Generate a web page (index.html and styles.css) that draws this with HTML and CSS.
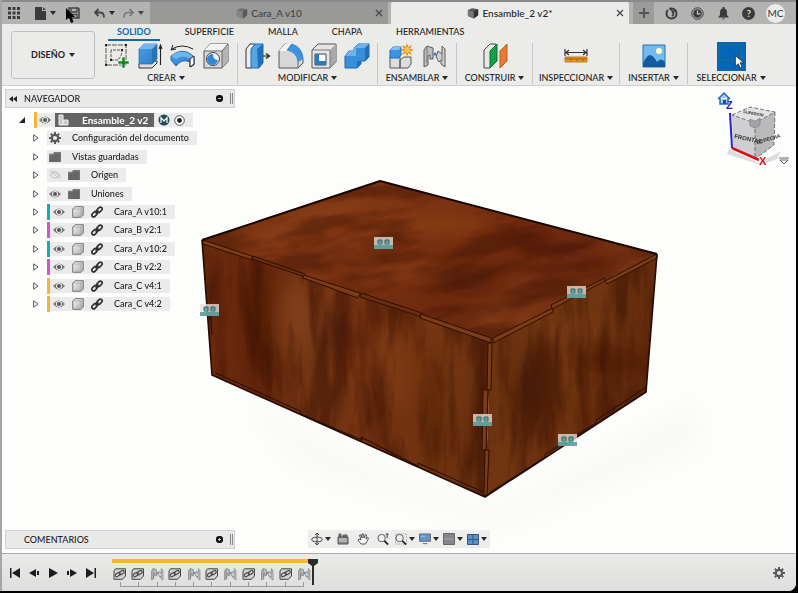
FILE: index.html
```html
<!DOCTYPE html>
<html lang="es">
<head>
<meta charset="utf-8">
<title>Ensamble_2 v2*</title>
<link rel="stylesheet" href="styles.css">
</head>
<body>
<svg class="defs" aria-hidden="true">
  <defs>
    <linearGradient id="gBlue" x1="0" y1="0" x2="1" y2="1"><stop offset="0" stop-color="#4aa0e6"/><stop offset="1" stop-color="#2b7cc9"/></linearGradient>
    <linearGradient id="gGrey" x1="0" y1="0" x2="1" y2="1"><stop offset="0" stop-color="#f6f6f6"/><stop offset="1" stop-color="#a9a9a9"/></linearGradient>
    <symbol id="eye" viewBox="0 0 12 10"><path d="M0 5Q6-2 12 5Q6 12 0 5Z" fill="#777"/><circle cx="6" cy="5" r="3" fill="#eee"/><circle cx="6" cy="5" r="2" fill="#555"/></symbol>
    <symbol id="eyeoff" viewBox="0 0 12 10"><path d="M1 5Q6-1 11 5Q6 11 1 5M1 1l10 8M3 0l9 7" fill="none" stroke="#c2c2c2"/></symbol>
    <symbol id="folder" viewBox="0 0 13 11"><path d="M0 2h4l2-2h7v11H0Z" fill="#666"/><path d="M0 3h5l2-2h6" fill="none" stroke="#999" stroke-width=".7"/></symbol>
    <symbol id="gear" viewBox="0 0 12 12"><circle cx="6" cy="6" r="3.2" fill="none" stroke="#5b5b5b" stroke-width="2.2"/><path d="M6 0v2.500M6 9.500V12M0 6h2.500M9.500 6H12M1.800 1.800l1.800 1.800M8.400 8.400l1.800 1.800M10.200 1.800L8.400 3.600M3.600 8.400l-1.800 1.800" stroke="#5b5b5b" stroke-width="2"/></symbol>
    <symbol id="body" viewBox="0 0 12 12"><path d="M1 3L3 .7H11.300V9L9 11.300H.700V3Z" fill="url(#gGrey)" stroke="#77777f" stroke-linejoin="round"/><path d="M1 3H9V11M9 3l2-2" fill="none" stroke="#a5a5ad" stroke-width=".8"/></symbol>
    <symbol id="link" viewBox="0 0 12 12"><g fill="none" stroke="#2c2c2c" stroke-width="1.600"><rect x="5.500" y="2" width="6" height="3.600" rx="1.800" transform="rotate(-45 8.500 3.800)"/><rect x=".5" y="6.400" width="6" height="3.600" rx="1.800" transform="rotate(-45 3.500 8.200)"/><path d="M4.500 7.500l3-3"/></g></symbol>
    <symbol id="tri" viewBox="0 0 6 8"><path d="M.7.8v6.400L5 4Z" fill="#fff" stroke="#444" stroke-width=".9"/></symbol>
    <symbol id="triopen" viewBox="0 0 6 6"><path d="M6 0v6H0Z" fill="#222"/></symbol>
    <symbol id="cube" viewBox="0 0 14 13"><path d="M1 3L6 1L13 2V9L8 13L1 10Z" fill="#555"/><path d="M1 3L8 5V13L1 10Z" fill="#777"/><path d="M8 5l5-3v7l-5 4Z" fill="#303030"/></symbol>
    <symbol id="comp" viewBox="0 0 14 12"><path d="M2.500.8H12.500V8L9.500 11.300H1V3Z" fill="#d2d2d2" stroke="#444"/><g fill="none" stroke="#444" stroke-width="1.100"><rect x="2" y="5" width="5.500" height="3" rx="1.500" transform="rotate(-30 5 6.500)"/><rect x="6" y="3.500" width="5.500" height="3" rx="1.500" transform="rotate(-30 8 5)"/></g></symbol>
    <symbol id="joint" viewBox="0 0 26 26"><path d="M3 24V7L6 3L12 5V16H9V12L7 13V22Z" fill="#bdbdbd" stroke="#5b5b5b" stroke-linejoin="round"/><path d="M24 24V6L21 3V11L17 8L15 14L18 19L20 17V21Z" fill="#cfcfcf" stroke="#5b5b5b" stroke-linejoin="round"/><path d="M6 3V20M21 11V18" stroke="#777"/><circle cx="14" cy="11" r="1.500" fill="#267bd0"/></symbol>
    <symbol id="x" viewBox="0 0 8 8"><path d="M1 1l6 6M7 1L1 7" stroke="#444" stroke-width="1.200"/></symbol>
    <symbol id="mark" viewBox="0 0 19 12"><path d="M0 0H19V12H0Z" fill="#e8dfd8" fill-opacity=".78"/><path d="M0 12V8H4V3H8V8H11V3H15V8H19V12Z" fill="#4b9896" fill-opacity=".82"/><path d="M4 7V3H8V7M11 7V3H15V7" fill="none" stroke="#386966"/></symbol>
  </defs>
</svg>

<div class="window">
  <header class="titlebar">
    <div class="quick">
      <button class="ib" aria-label="Panel de datos"><svg width="12" height="12" viewBox="0 0 12 12" fill="#3b3b3b"><path d="M0 0h3v3H0zM4.500 0h3v3h-3zM9 0h3v3H9zM0 4.500h3v3H0zM4.500 4.500h3v3h-3zM9 4.500h3v3H9zM0 9h3v3H0zM4.500 9h3v3h-3zM9 9h3v3H9z"/></svg></button>
      <button class="ib drop file" aria-label="Archivo"><svg width="11" height="13" viewBox="0 0 11 13"><path d="M0 0h7v4h4v9H0ZM8 0l3 3H8Z" fill="#3b3b3b"/></svg></button>
      <button class="ib save" aria-label="Guardar"><svg width="12" height="12" viewBox="0 0 12 12"><path d="M1 1h9l1 1v9H1Z" fill="none" stroke="#444" stroke-width="1.500"/><path d="M3 1v4h6V1M3 11V7.500h6V11" fill="none" stroke="#444" stroke-width="1.300"/></svg>
        <svg class="cursor" width="9" height="15" viewBox="0 0 9 15"><path d="M0 0V12L3 9.500L5 15L7.500 14L5.500 9H9Z" fill="#050505"/></svg></button>
      <button class="ib drop undo" aria-label="Deshacer"><svg width="11" height="10" viewBox="0 0 11 10"><path d="M4.500 1L1 4.500L4.500 8M1 4.500H6Q10 4.500 10 9.500" fill="none" stroke="#454545" stroke-width="1.800"/></svg></button>
      <button class="ib drop redo" aria-label="Rehacer"><svg width="11" height="10" viewBox="0 0 11 10"><path d="M6.500 1L10 4.500L6.500 8M10 4.500H5Q1 4.500 1 9.500" fill="none" stroke="#666" stroke-width="1.600"/></svg></button>
    </div>
    <div class="doc off"><svg width="12" height="12"><use href="#cube"/></svg><span>Cara_A v10</span><button class="close" aria-label="Cerrar Cara_A"><svg width="8" height="8"><use href="#x"/></svg></button></div>
    <div class="doc on"><svg width="12" height="12"><use href="#cube"/></svg><span>Ensamble_2 v2*</span><button class="close" aria-label="Cerrar Ensamble_2"><svg width="8" height="8"><use href="#x"/></svg></button></div>
    <div class="account">
      <button class="plus" aria-label="Nuevo"><svg width="10" height="10" viewBox="0 0 10 10"><path d="M5 0v10M0 5h10" stroke="#555" stroke-width="2"/></svg></button>
      <button class="ib" aria-label="Extensiones"><svg width="13" height="13" viewBox="0 0 13 13"><circle cx="6.500" cy="6.500" r="5" fill="none" stroke="#3b3b3b" stroke-width="2"/><path d="M5 1L8 5L11 3M7 5Q10 7 7 9" fill="none" stroke="#3b3b3b" stroke-width="1.600"/><path d="M2 0l2 3" stroke="#b1b1b1" stroke-width="2"/></svg></button>
      <button class="ib" aria-label="Estado de trabajos"><svg width="13" height="13" viewBox="0 0 13 13"><circle cx="6.500" cy="6.500" r="5.700" fill="none" stroke="#3b3b3b"/><circle cx="6.500" cy="6.500" r="4.300" fill="#3b3b3b"/><path d="M6.500 3.500v3.300H9.500" fill="none" stroke="#ccc" stroke-width="1.200"/></svg></button>
      <button class="ib" aria-label="Notificaciones"><svg width="11" height="13" viewBox="0 0 11 13"><path d="M4.500 0h2v1.500Q9 2 9 5.500V8l2 2.500H0L2 8V5.500Q2 2 4.500 1.500ZM4 11.300h3l-1.500 1.500Z" fill="#3b3b3b"/></svg></button>
      <button class="ib help" aria-label="Ayuda">?</button>
      <button class="avatar">MC</button>
    </div>
  </header>

  <section class="ribbon">
    <button class="workspace caret">DISEÑO</button>
    <div class="ribbon-main">
      <nav class="tabs"><a class="current" href="#">SOLIDO</a><a href="#">SUPERFICIE</a><a href="#">MALLA</a><a href="#">CHAPA</a><a href="#">HERRAMIENTAS</a></nav>
      <div class="groups">
        <div class="group">
          <div class="tools">
            <svg viewBox="0 0 26 26"><g fill="none" stroke="#333"><path d="M2 2h20v20H2Z" stroke-dasharray="5 1" stroke-width=".8"/><path d="M7 7V17M7 17H14Q18 13 18 7H7" stroke-dasharray="3 1" stroke-width=".8"/></g><path d="M1 1h2v2H1zM21 1h2v2h-2zM1 21h2v2H1zM6 16h2v2H6zM17 6h2v2h-2z" fill="#222"/><path d="M18 14h3v4h4v3h-4v4h-3v-4h-4v-3h4Z" fill="#118320" stroke="#eee" stroke-width=".6"/></svg>
            <svg viewBox="0 0 26 26"><path d="M2 21L5 18H20V20L15 25H2Z" fill="#ddd" stroke="#333"/><path d="M2 6L7 1H20V16L15 21H2Z" fill="url(#gBlue)" stroke="#246aae" stroke-width=".7"/><path d="M15 6V21L20 16V1Z" fill="#2872b8"/><path d="M2 6L7 1H20L15 6Z" fill="#72b6ed"/><path d="M23.500 22V3M22 6l1.500-4L25 6" fill="none" stroke="#222" stroke-width="1.100"/></svg>
            <svg viewBox="0 0 26 26"><path d="M1 13Q12 4 22 12L24 14V22L20 24V19Q12 15 6 23L1 17Z" fill="url(#gBlue)" stroke="#1d66a9"/><path d="M1 13L6 16Q13 11 20 16L24 14Q12 4 1 13Z" fill="#71b5ed"/><path d="M20 16l4-3v8l-4 3Z" fill="#fff" stroke="#222"/><path d="M2 6Q12 0 23 6M3 2L1 7L6 6" fill="none" stroke="#222"/></svg>
            <svg viewBox="0 0 26 26"><path d="M1 8L7 1H25V19L19 25H1Z" fill="#d6d6d6" stroke="#555"/><path d="M1 8L7 1H25L19 8Z" fill="#f3f3f3"/><path d="M19 8V25L25 19V1Z" fill="#b4b4b4"/><path d="M1 8H19V25M19 8L25 1" fill="none" stroke="#666"/><circle cx="10" cy="16" r="6.500" fill="#f5f5f5" stroke="#444"/><path d="M10 11A5.500 5.500 0 1 0 15 17Q10 17 10 11Z" fill="#3188d6"/></svg>
          </div><button class="caret">CREAR</button>
        </div>
        <div class="group">
          <div class="tools">
            <svg viewBox="0 0 26 26"><path d="M1 6L5 1H10V20L6 25H1Z" fill="#eee" stroke="#333"/><path d="M6 6L10 1H18V20L14 25H6Z" fill="#55a6e8" stroke="#236bae"/><path d="M12 6L18 1V20L13 25Z" fill="#236fb6"/><path d="M18 13H24M21 10.500L24.500 13L21 15.500" fill="none" stroke="#222" stroke-width="1.200"/></svg>
            <svg viewBox="0 0 26 26"><path d="M1 8L7 1Q23 2 25 16V20L20 25H1Z" fill="#d7d7d7" stroke="#555"/><path d="M1 8L7 1H13L8 8Z" fill="#f5f5f5"/><path d="M9 7L14 1Q24 4 25 15L20 19Q19 9 9 7Z" fill="#3c93df" stroke="#2170b7" stroke-width=".6"/><path d="M20 19V25" stroke="#666"/></svg>
            <svg viewBox="0 0 26 26"><path d="M1 7L7 1H25V19L19 25H1Z" fill="#e6e6e6" stroke="#555"/><path d="M19 7L25 1V19L19 25Z" fill="#a9a9a9"/><path d="M1 7H19V25" fill="none" stroke="#777"/><path d="M4 11H15V22H4Z" fill="#fff" stroke="#444"/><path d="M4 11H8V18H15V22H4Z" fill="#267cc8"/></svg>
            <svg viewBox="0 0 26 26"><path d="M1 13L5 8H10V5L14 1H25V14L21 18H17V21L13 25H1Z" fill="#398fd9" stroke="#1e69b0"/><path d="M1 13L5 8H10V5L14 1H25L21 5H12V13Z" fill="#6db4ee"/><path d="M21 5V18L25 14V1ZM13 18V25L17 21V18Z" fill="#236eb4"/></svg>
          </div><button class="caret">MODIFICAR</button>
        </div>
        <div class="group">
          <div class="tools">
            <svg viewBox="0 0 26 26"><path d="M2 14H12V25H2ZM12 17L16 14H23V21L20 25H12Z" fill="#dedede" stroke="#555"/><path d="M2 7L5 4H13V12L11 15H2Z" fill="#3c93df" stroke="#226eb4"/><path d="M2 7L5 4H13L11 7Z" fill="#82bff0"/><path d="M19 0l1.200 4L24 2l-2 3.800L26 7l-4 1.300L24 12l-3.800-2L19 14l-1.200-4L14 12l2-3.700L12 7l4-1.200L14 2l3.800 2Z" fill="#e28a14"/><circle cx="19" cy="7" r="3" fill="#f9c24b"/></svg>
            <svg viewBox="0 0 26 26"><use href="#joint"/></svg>
          </div><button class="caret">ENSAMBLAR</button>
        </div>
        <div class="group">
          <div class="tools"><svg viewBox="0 0 26 26"><path d="M2 7L8 1H14V19L8 25H2Z" fill="#e8e8e8" stroke="#444"/><path d="M8 8L15 1V18L8 25Z" fill="#16a04a" stroke="#08702c"/><path d="M18 8L25 1V18L18 25Z" fill="#e87b32" stroke="#b95a1e"/></svg></div><button class="caret">CONSTRUIR</button>
        </div>
        <div class="group">
          <div class="tools"><svg viewBox="0 0 26 26"><path d="M2 6V13M24 6V13M3 9.500H23M6 7L3 9.500L6 12M20 7L23 9.500L20 12" fill="none" stroke="#333" stroke-width="1.200"/><path d="M2 14H24V19H2Z" fill="#f0a020" stroke="#a96309" stroke-width=".8"/><path d="M4 15v2M6 15v2M8 15v3M10 15v2M12 15v2M14 15v3M16 15v2M18 15v2M20 15v3M22 15v2" stroke="#704000" stroke-width=".8"/></svg></div><button class="caret">INSPECCIONAR</button>
        </div>
        <div class="group">
          <div class="tools"><svg viewBox="0 0 26 26"><path d="M2 2H24V24H2Z" fill="#74b9f0" stroke="#2772b3"/><circle cx="18" cy="8" r="3" fill="#fff8c7"/><path d="M2 20Q6 12 9 12Q13 13 16 19Q20 14 24 19V24H2Z" fill="#125c9e"/></svg></div><button class="caret">INSERTAR</button>
        </div>
        <div class="group">
          <div class="tools select"><svg viewBox="0 0 30 30"><path d="M0 0H30V30H0Z" fill="#0765b5"/><path d="M2 3H25V19H2Z" fill="none" stroke="#257c73" stroke-dasharray="2 1"/><path d="M19 14V25L22 22.500L24 27L26 26L24 21.500H27.500Z" fill="#fff" stroke="#222" stroke-width=".8"/></svg></div><button class="caret">SELECCIONAR</button>
        </div>
      </div>
    </div>
  </section>

  <main class="viewport">
    <svg class="scene" viewBox="0 0 794 467" role="img" aria-label="Caja de madera">
      <defs>
        <linearGradient id="wTop" x1="0" y1="0" x2="1" y2=".6"><stop offset="0" stop-color="#7a3613"/><stop offset=".35" stop-color="#803714"/><stop offset=".7" stop-color="#6f2b0e"/><stop offset="1" stop-color="#793514"/></linearGradient>
        <linearGradient id="wLeft"><stop offset="0" stop-color="#6c2b0e"/><stop offset=".2" stop-color="#64260b"/><stop offset=".4" stop-color="#783816"/><stop offset=".6" stop-color="#713010"/><stop offset=".82" stop-color="#743612"/><stop offset="1" stop-color="#5e290c"/></linearGradient>
        <linearGradient id="wRight" x1="0" y1="0" x2="1" y2=".8"><stop offset="0" stop-color="#6a3311"/><stop offset=".5" stop-color="#703511"/><stop offset="1" stop-color="#5d260a"/></linearGradient>
        <clipPath id="cTop"><path d="M202 240L380 181L657 254L492 341Z"/></clipPath>
        <clipPath id="cLeft"><path d="M202 240L491 341L485 497L212 375Z"/></clipPath>
        <clipPath id="cRight"><path d="M491 341L657 254L646 392L485 497Z"/></clipPath>
        <filter id="soft" x="-50%" y="-50%" width="200%" height="200%"><feGaussianBlur stdDeviation="8"/></filter>
        <filter id="shade" x="-20%" y="-50%" width="140%" height="200%"><feGaussianBlur stdDeviation="12"/></filter>
        <filter id="grainH" x="0" y="0" width="100%" height="100%" color-interpolation-filters="sRGB"><feTurbulence type="fractalNoise" baseFrequency=".012 .045" numOctaves="4" seed="4"/><feColorMatrix values="0 0 0 0 .22  0 0 0 0 .06  0 0 0 0 .01  4 0 0 0 -1.700"/></filter>
        <filter id="grainV" x="0" y="0" width="100%" height="100%" color-interpolation-filters="sRGB"><feTurbulence type="fractalNoise" baseFrequency=".045 .009" numOctaves="4" seed="9"/><feColorMatrix values="0 0 0 0 .22  0 0 0 0 .06  0 0 0 0 .01  4 0 0 0 -1.700"/></filter>
      </defs>
      <g transform="translate(-2 -86)">
        <path d="M240 400L485 510L700 400V450L500 530L300 470Z" fill="#000" opacity=".015" filter="url(#shade)"/>
        <path d="M202 240L380 181L657 254L492 341Z" fill="url(#wTop)"/>
        <g clip-path="url(#cTop)">
          <g filter="url(#soft)" opacity=".7"><ellipse cx="310" cy="222" rx="60" ry="7" fill="#94461f" transform="rotate(-18 310 222)"/><ellipse cx="440" cy="225" rx="50" ry="8" fill="#904219"/><ellipse cx="390" cy="272" rx="50" ry="8" fill="#91421c"/><ellipse cx="465" cy="280" rx="32" ry="13" fill="#511a07"/><ellipse cx="560" cy="250" rx="55" ry="8" fill="#5a1c09" transform="rotate(14 560 250)"/><ellipse cx="500" cy="318" rx="40" ry="10" fill="#87401a"/></g>
          <path d="M150 120H700V420H150Z" filter="url(#grainH)" opacity=".4" transform="rotate(-10 420 260)"/>
        </g>
        <path d="M202 240L491 341L485 497L212 375Z" fill="url(#wLeft)"/>
        <g clip-path="url(#cLeft)">
          <g filter="url(#soft)" opacity=".6"><ellipse cx="295" cy="320" rx="15" ry="40" fill="#8a4a22"/><ellipse cx="262" cy="330" rx="9" ry="60" fill="#481505"/><ellipse cx="335" cy="335" rx="14" ry="25" fill="#4d1a08"/><ellipse cx="390" cy="370" rx="20" ry="45" fill="#824018"/><ellipse cx="434" cy="410" rx="8" ry="60" fill="#4c1d06"/><ellipse cx="460" cy="370" rx="8" ry="50" fill="#7b3b14"/></g>
          <path d="M190 220H500V510H190Z" filter="url(#grainV)" opacity=".5"/>
        </g>
        <path d="M491 341L657 254L646 392L485 497Z" fill="url(#wRight)"/>
        <g clip-path="url(#cRight)">
          <g filter="url(#soft)" opacity=".6"><ellipse cx="570" cy="330" rx="35" ry="12" fill="#7a3d13"/><ellipse cx="610" cy="360" rx="35" ry="14" fill="#4a1605"/><ellipse cx="530" cy="385" rx="14" ry="35" fill="#4a1a07"/><ellipse cx="560" cy="425" rx="30" ry="10" fill="#6f3410"/></g>
          <path d="M480 250H660V500H480Z" filter="url(#grainV)" opacity=".5"/>
        </g>
        <g fill="#7d3b17" stroke="#2b1005" stroke-width="1" stroke-linejoin="round">
          <path d="M203 240L252 256V260L203 244Z"/><path d="M253 256L305 274V277L252 259Z" fill="#6b2d0f"/><path d="M304 275L360 293L358 298L303 278Z"/><path d="M361 293L422 313V317L360 297Z" fill="#6b2d0f"/><path d="M421 314L491 338V343L420 318Z"/>
          <path d="M493 338L553 308V312L493 343Z"/><path d="M551 305L605 278V281L552 309Z"/><path d="M605 281L657 254V258L607 284Z"/>
          <path d="M488 343H492L491 390H487Z"/><path d="M483 390H488L486 450H482Z"/><path d="M485 450H489L487 495H484Z"/>
        </g>
        <g fill="none" stroke="#240b02" stroke-linejoin="round">
          <path d="M202 240L212 375L485 497L646 392L657 254" stroke-width="1.600"/>
          <path d="M216 373L300 411L301 414L362 440L361 437L418 466V463L483 492M489 493L545 457V454L596 423V420L645 388M210 310L212 335"/>
          <path d="M202 240L380 181L657 254" stroke="#170702" stroke-width="2"/>
        </g>
        <use href="#mark" x="374" y="237" width="19" height="12"/><use href="#mark" x="200" y="304" width="19" height="12"/><use href="#mark" x="567" y="286" width="19" height="12"/><use href="#mark" x="473" y="414" width="19" height="12"/><use href="#mark" x="558" y="434" width="19" height="12"/>
      </g>
    </svg>

    <div class="overlay">
      <aside class="browser">
        <div class="panel-head"><svg width="8" height="6" viewBox="0 0 8 6"><path d="M4 0v6L0 3ZM8 0v6L4 3Z" fill="#222"/></svg><span>NAVEGADOR</span><button class="dot minus" aria-label="Contraer"></button><i class="grip"></i></div>
        <ul class="tree">
          <li class="root"><svg class="t" width="6" height="6"><use href="#triopen"/></svg><i class="bar y"></i><div class="chip"><svg width="12" height="10"><use href="#eye"/></svg><div class="active"><svg width="12" height="12" viewBox="0 0 12 12"><path d="M1 1h4v10H1ZM5 6h5v5H5Z" fill="#c9c9c9" stroke="#eee"/></svg><span>Ensamble_2 v2</span></div><svg width="12" height="12" viewBox="0 0 12 12"><circle cx="6" cy="6" r="5.500" fill="#24485b"/><path d="M3 9V3.500L6 7L9 3.500V9" fill="none" stroke="#fff" stroke-width="1.200"/></svg><svg width="11" height="11" viewBox="0 0 11 11"><circle cx="5.500" cy="5.500" r="4.800" fill="#fff" stroke="#555"/><circle cx="5.500" cy="5.500" r="2.400" fill="#222"/></svg></div></li>
          <li><svg class="t" width="6" height="8"><use href="#tri"/></svg><div class="chip"><svg width="12" height="12"><use href="#gear"/></svg><span>Configuración del documento</span></div></li>
          <li><svg class="t" width="6" height="8"><use href="#tri"/></svg><div class="chip"><svg width="12" height="10"><use href="#folder"/></svg><span>Vistas guardadas</span></div></li>
          <li><svg class="t" width="6" height="8"><use href="#tri"/></svg><div class="chip"><svg width="12" height="10"><use href="#eyeoff"/></svg><svg width="12" height="10"><use href="#folder"/></svg><span>Origen</span></div></li>
          <li><svg class="t" width="6" height="8"><use href="#tri"/></svg><div class="chip"><svg width="12" height="10"><use href="#eye"/></svg><svg width="12" height="10"><use href="#folder"/></svg><span>Uniones</span></div></li>
          <li class="part"><svg class="t" width="6" height="8"><use href="#tri"/></svg><i class="bar c"></i><div class="chip"><svg width="12" height="10"><use href="#eye"/></svg><svg width="12" height="12"><use href="#body"/></svg><svg width="12" height="12"><use href="#link"/></svg><span>Cara_A v10:1</span></div></li>
          <li class="part"><svg class="t" width="6" height="8"><use href="#tri"/></svg><i class="bar m"></i><div class="chip"><svg width="12" height="10"><use href="#eye"/></svg><svg width="12" height="12"><use href="#body"/></svg><svg width="12" height="12"><use href="#link"/></svg><span>Cara_B v2:1</span></div></li>
          <li class="part"><svg class="t" width="6" height="8"><use href="#tri"/></svg><i class="bar c"></i><div class="chip"><svg width="12" height="10"><use href="#eye"/></svg><svg width="12" height="12"><use href="#body"/></svg><svg width="12" height="12"><use href="#link"/></svg><span>Cara_A v10:2</span></div></li>
          <li class="part"><svg class="t" width="6" height="8"><use href="#tri"/></svg><i class="bar m"></i><div class="chip"><svg width="12" height="10"><use href="#eye"/></svg><svg width="12" height="12"><use href="#body"/></svg><svg width="12" height="12"><use href="#link"/></svg><span>Cara_B v2:2</span></div></li>
          <li class="part"><svg class="t" width="6" height="8"><use href="#tri"/></svg><i class="bar y"></i><div class="chip"><svg width="12" height="10"><use href="#eye"/></svg><svg width="12" height="12"><use href="#body"/></svg><svg width="12" height="12"><use href="#link"/></svg><span>Cara_C v4:1</span></div></li>
          <li class="part"><svg class="t" width="6" height="8"><use href="#tri"/></svg><i class="bar y"></i><div class="chip"><svg width="12" height="10"><use href="#eye"/></svg><svg width="12" height="12"><use href="#body"/></svg><svg width="12" height="12"><use href="#link"/></svg><span>Cara_C v4:2</span></div></li>
        </ul>
      </aside>
      <svg class="viewcube" width="76" height="78" viewBox="0 0 76 78" role="img" aria-label="Cubo de vistas">
        <path d="M10 58L40 72L62 60L58 68L42 74L8 63Z" fill="#bbb" opacity=".5"/>
        <path d="M13 24L31 16L56 21L38 32Z" fill="#e2e2e2"/><path d="M13 24L36 32V68L14 57Z" fill="#cfcfd1"/><path d="M36 32L56 21L55 54L36 68Z" fill="#b9b9bb"/>
        <path d="M13 24L31 16L56 21L36 32ZM36 32V68M56 21L55 54L36 68" fill="none" stroke="#555" stroke-width=".8" stroke-dasharray="4 2"/>
        <path d="M31 28l5 2l5-3v7l-5 3l-5-2Z" fill="#a2a2a7" stroke="#777" stroke-width=".6"/>
        <text x="15" y="47" transform="rotate(12 15 47)" class="face">FRONTAL</text><text x="38" y="53" transform="rotate(-16 38 53)" class="face side">DERECHA</text><text x="24" y="22" transform="rotate(10 24 22)" class="face up">SUPERIOR</text>
        <path d="M11 22L13 57" stroke="#2b20c9" stroke-width="2"/><path d="M13 57L40 69" stroke="#d4121c" stroke-width="2.500"/>
        <text x="7" y="18" class="axis z">Z</text><text x="40" y="74" class="axis xx">X</text>
        <path d="M-1 8L5 2L11 8M1 7V13H9V7" fill="#9ec9f2" stroke="#2b6cb0" stroke-width="1.500"/><path d="M4 9h3v4H4Z" fill="#1c528c"/>
        <path d="M60 67h10M61 69l4 4l4-4Z" fill="#fff" stroke="#666"/>
      </svg>
      <div class="panel-head comments"><span>COMENTARIOS</span><button class="dot add" aria-label="Añadir comentario"></button><i class="grip"></i></div>
      <div class="navbar">
        <button class="ib drop" aria-label="Orbitar"><svg width="12" height="12" viewBox="0 0 12 12" fill="none" stroke="#444"><ellipse cx="6" cy="6.500" rx="5.300" ry="2.300"/><path d="M6 0v12M4 2l2-2l2 2M4 10l2 2l2-2"/></svg></button>
        <button class="ib solo" aria-label="Mirar a"><svg width="12" height="12" viewBox="0 0 12 12"><path d="M1 4h10v7H1ZM2 1h2v3H2ZM6 2h4v2H6Z" fill="#888" stroke="#555"/><path d="M2 6h8M2 8h8" stroke="#ddd"/></svg></button>
        <button class="ib solo" aria-label="Encuadre"><svg width="12" height="12" viewBox="0 0 12 12"><path d="M4 11L1 7L2 6L4 7L2.500 2L4 2L5 5L5 1H6.500L7 5L8.500 1.500L9.500 2L9 6L11 4.500L11.500 5.500L8.500 11Z" fill="#fff" stroke="#444" stroke-width=".9"/></svg></button>
        <button class="ib solo" aria-label="Zoom"><svg width="12" height="12" viewBox="0 0 13 12"><circle cx="5" cy="5" r="4" fill="#eee" stroke="#555"/><path d="M8 8l4 4" stroke="#222" stroke-width="2"/><path d="M11 0v5M9.500 1.500L11 0l1.500 1.500" stroke="#333" fill="none"/></svg></button>
        <button class="ib drop" aria-label="Zoom de ventana"><svg width="12" height="12" viewBox="0 0 13 12"><path d="M.5.5h12v11H.5Z" fill="none" stroke="#999" stroke-dasharray="1 1"/><circle cx="5" cy="5" r="4" fill="#eee" stroke="#555"/><path d="M8 8l4 4" stroke="#222" stroke-width="2"/></svg></button>
        <button class="ib drop" aria-label="Visualización"><svg width="12" height="12" viewBox="0 0 13 12"><path d="M.5.500h12v8H.5ZM4 11h5" fill="#5f94cf" stroke="#666"/><path d="M2 3h5" stroke="#abd0f5"/></svg></button>
        <button class="ib drop" aria-label="Rejilla"><svg width="12" height="12" viewBox="0 0 12 12"><path d="M.5.500h11v11H.5Z" fill="#85858b" stroke="#666"/><path d="M1 6h10" stroke="#aaa"/></svg></button>
        <button class="ib drop" aria-label="Ventanas"><svg width="12" height="11" viewBox="0 0 12 11"><path d="M.5.500h11v10H.5Z" fill="#5a8fca" stroke="#35577d"/><path d="M6 0v11M0 5.500h12" stroke="#35577d"/></svg></button>
      </div>
    </div>
  </main>

  <footer class="timeline">
    <div class="play">
      <button class="ib" aria-label="Inicio"><svg width="10" height="10" viewBox="0 0 10 10"><path d="M0 0h1.500v10H0ZM10 0v10L2 5Z" fill="#1d1d1d"/></svg></button>
      <button class="ib" aria-label="Atrás"><svg width="10" height="10" viewBox="0 0 10 10"><path d="M7 1v8L0 5ZM8 3h2v4H8Z" fill="#1d1d1d"/></svg></button>
      <button class="ib" aria-label="Reproducir"><svg width="10" height="10" viewBox="0 0 10 10"><path d="M1 0v10L10 5Z" fill="#1d1d1d"/></svg></button>
      <button class="ib" aria-label="Adelante"><svg width="10" height="10" viewBox="0 0 10 10"><path d="M3 1v8L10 5ZM0 3h2v4H0Z" fill="#1d1d1d"/></svg></button>
      <button class="ib" aria-label="Fin"><svg width="10" height="10" viewBox="0 0 10 10"><path d="M8.500 0H10v10H8.500ZM0 0v10L8 5Z" fill="#1d1d1d"/></svg></button>
    </div>
    <div class="track">
      <div class="progress"></div>
      <div class="steps">
        <svg><use href="#comp"/></svg><svg><use href="#comp"/></svg><svg><use href="#joint"/></svg><svg><use href="#comp"/></svg><svg><use href="#joint"/></svg><svg><use href="#comp"/></svg><svg><use href="#joint"/></svg><svg><use href="#comp"/></svg><svg><use href="#joint"/></svg><svg><use href="#comp"/></svg><svg><use href="#joint"/></svg>
      </div>
      <div class="ruler"><i></i><i></i><i></i><i></i><i></i><i></i><i></i><i></i><i></i><i></i></div>
      <svg class="head" width="10" height="26" viewBox="0 0 10 26"><path d="M0 0h10v4L6 7v19H4V7L0 4Z" fill="#2b2b2b"/></svg>
    </div>
    <button class="ib settings" aria-label="Ajustes"><svg width="12" height="12"><use href="#gear"/></svg></button>
  </footer>
</div>
</body>
</html>
```
FILE: styles.css
```css
* { box-sizing: border-box; }
body {
  margin: 0;
  height: 100vh;
  background: #000;
  color: #222;
  font: 500 9px/12px Lato, "Open Sans", sans-serif;
}
button { border: 0; padding: 0; background: none; color: inherit; font: inherit; }
a { color: inherit; text-decoration: none; }
svg { display: block; flex: none; }
ul { list-style: none; margin: 0; padding: 0; }
.defs { position: absolute; width: 0; height: 0; }

.window {
  display: flex;
  flex-direction: column;
  height: calc(100vh - 2px);
  margin-right: 2px;
  border-left: 2px solid #a6a6a6;
  border-radius: 0 0 8px 0;
  overflow: hidden;
  background: #fdfdfc;
}

.ib { display: flex; align-items: center; justify-content: center; }
.drop { gap: 4px; }
.drop::after, .caret::after {
  content: "";
  border: solid transparent;
  border-width: 4px 3px 0;
  border-top-color: #2a2a2a;
}

/* Title bar */
.titlebar {
  display: flex;
  height: 24px;
  flex: none;
  border-top: 2px solid #8b8b8b;
  background: #b3b3b2;
}
.quick { display: flex; align-items: center; width: 148px; padding-left: 6px; }
.file { margin-left: 15px; }
.save { position: relative; margin-left: 12px; }
.undo { margin-left: 14px; }
.redo { margin-left: 8px; opacity: .8; }
.cursor { position: absolute; left: -2px; top: 1px; }
.doc {
  position: relative;
  display: flex;
  flex: 1;
  align-items: center;
  justify-content: center;
  gap: 3px;
  font-size: 10px;
}
.off { background: #999998; color: #444; }
.off > svg { opacity: .6; }
.on { margin-left: 3px; background: #ebebe9; border-radius: 2px 2px 0 0; }
.close { position: absolute; right: 5px; top: 7px; }
.account { display: flex; align-items: center; width: 167px; padding: 0 11px 0 4px; justify-content: space-between; }
.plus { display: grid; place-items: center; width: 21px; height: 22px; margin-right: -3px; background: #9b9b9a; }
.help { width: 13px; height: 13px; border-radius: 50%; background: #3b3b3b; color: #ddd; font-weight: bold; font-size: 10px; }
.avatar { width: 19px; height: 19px; border-radius: 50%; background: #ececec; margin-left: -3px; color: #444; font-size: 10px; }
.account .ib, .avatar { flex: none; }

/* Ribbon */
.ribbon {
  display: flex;
  flex: none;
  height: 62px;
  padding: 7px 8px 0 9px;
  background: #ebebe9;
  border-bottom: 1px solid #cfcfcf;
}
.workspace {
  display: flex;
  align-items: center;
  justify-content: center;
  gap: 4px;
  width: 84px;
  height: 48px;
  border: 1px solid #c0c0c0;
  border-radius: 3px;
  font-weight: bold;
}
.ribbon-main { margin-top: -5px; }
.tabs { display: flex; gap: 34px; padding-left: 22px; height: 15px; }
.tabs .current {
  color: #0b69b0;
  font-weight: bold;
  padding: 0 9px;
  margin: 0 -9px;
  border-bottom: 2px solid #0b69b0;
}
.groups { display: grid; grid-template-columns: 143px 140px 79px 76px 87px 68px 86px; height: 43px; }
.group { display: flex; flex-direction: column; align-items: center; justify-content: space-between; border-right: 1px solid #c6c6c6; margin-top: 2px; }
.group:last-child { border: 0; }
.tools { display: flex; gap: 7px; height: 26px; align-items: center; }
.tools svg { width: 26px; height: 26px; }
.tools.select svg { width: 29px; height: 29px; }
.group .caret { display: flex; align-items: center; gap: 3px; white-space: nowrap; }

/* Viewport */
.viewport { position: relative; flex: 1; min-height: 0; }
.scene { position: absolute; inset: 0; width: 100%; height: 100%; }
.overlay {
  position: relative;
  display: grid;
  grid-template: 1fr auto / 230px 1fr;
  height: 100%;
  padding: 3px 1px 4px 3px;
}
.panel-head {
  display: flex;
  align-items: center;
  height: 19px;
  gap: 7px;
  padding: 0 1px 0 3px;
  background: #e9e9e8;
  border: 1px solid #d0d0d0;
}
.comments { padding-left: 18px; }
.dot { position: relative; width: 7px; height: 7px; border-radius: 3px; background: #111; margin-left: auto; }
.dot::after { content: ""; position: absolute; left: 2px; top: 3px; width: 3px; height: 1px; background: #ccc; }
.add::before { content: ""; position: absolute; left: 3px; top: 2px; width: 1px; height: 3px; background: #ccc; }
.grip { width: 3px; height: 11px; border: solid #888; border-width: 0 1px; }
.tree {
  display: flex;
  flex-direction: column;
  justify-content: space-between;
  height: 200px;
  margin-top: 4px;
  padding-left: 28px;
}
.tree li { display: flex; align-items: center; height: 16px; white-space: nowrap; }
.t { margin-right: 8px; }
.tree .root { margin-left: -14px; }
.root .t { margin-right: 9px; }
.chip { display: flex; align-items: center; gap: 7px; height: 14px; padding: 0 8px 0 2px; background: #ebebeb; }
.chip span { padding-left: 4px; }
.bar { width: 3px; height: 16px; }
.y { background: #f0b73c; }
.c { background: #16a9b6; }
.m { background: #cf55c8; }
.root .chip { gap: 4px; }
.part .chip { padding-left: 3px; }
.active { display: flex; align-items: center; gap: 8px; height: 14px; padding: 0 6px 0 3px; background: #646464; color: #fff; font-weight: bold; font-size: 10px; }
.viewcube { justify-self: end; margin-top: 2px; overflow: visible; }
.face { font: bold 6px "Liberation Sans", sans-serif; fill: #333; }
.side { font-size: 5px; }
.up { font-size: 4px; }
.axis { font: bold 11px "Liberation Sans", sans-serif; }
.z { fill: #2b20c9; }
.xx { fill: #e0121c; }
.navbar {
  display: flex;
  align-items: center;
  justify-self: start;
  gap: 4px;
  height: 18px;
  margin-left: 73px;
  padding: 0 3px;
  background: #ededec;
}
.navbar .drop { gap: 2px; }
.solo { padding: 0 2px; }

/* Timeline */
.timeline {
  display: flex;
  align-items: center;
  flex: none;
  height: 38px;
  padding: 0 11px 0 8px;
  border-top: 1px solid #aaa;
  background: linear-gradient(#eaeae9, #dededd);
}
.play { display: flex; gap: 9px; }
.track { position: relative; width: 200px; margin-left: 16px; padding-top: 1px; }
.progress { height: 4px; background: #f5b731; }
.steps { display: flex; justify-content: space-between; padding: 4px 1px 1px; }
.steps svg { width: 14px; height: 14px; }
.ruler { display: flex; height: 5px; margin: 0 8px; border: 1px solid #999; border-top: 0; }
.ruler i { flex: 1; border-right: 1px solid #999; }
.ruler i:last-child { border: 0; }
.head { position: absolute; right: -6px; top: 1px; }
.settings { margin-left: auto; }
```
